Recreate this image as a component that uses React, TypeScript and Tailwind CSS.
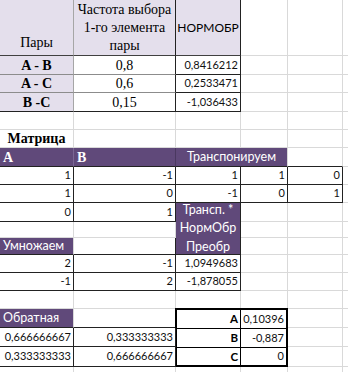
import React from "react";

const sans = "font-['Lato','Open_Sans',sans-serif]";
const serif = "font-['Liberation_Serif','Times_New_Roman',serif]";

// plain Excel cell with light gridlines on right/bottom
function Cell({ className = "", children }: { className?: string; children?: React.ReactNode }) {
  return (
    <div className={`flex items-center whitespace-nowrap border-r border-b border-[#d9d9d9] min-w-0 ${className}`}>
      {children}
    </div>
  );
}

const num = `${sans} text-[11px] justify-end pr-[2px] text-[#111] border-r-[#222] border-b-[#222]`;
const lav = "bg-[#e4dfec]";
const purple = `bg-[#60497a] text-white ${sans} text-[12.5px]`;

function Empty({ n }: { n: number }) {
  return (
    <>
      {Array.from({ length: n }).map((_, i) => (
        <Cell key={i} />
      ))}
    </>
  );
}

export default function App() {
  return (
    <div className="w-[348px] h-[372px] overflow-hidden bg-white">
      <div className="grid grid-cols-[74px_102px_65px_47px_55px_60px] grid-rows-[56px_19px_18px_19px_18px_18px_19px_18px_18px_19px_16px_17px_18px_18px_18px_19px_19px_20px_20px]">
        {/* header of pairs table */}
        <Cell className={`${lav} ${serif} text-[14px] items-end justify-center pb-[2px] border-r-[#a6a6a6] border-b-[#404040]`}>
          Пары
        </Cell>
        <Cell className={`${lav} ${serif} text-[14px] flex-col justify-center leading-[18px] border-r-[#222] border-b-[#404040]`}>
          <span>Частота выбора</span>
          <span>1-го элемента</span>
          <span>пары</span>
        </Cell>
        <Cell className={`${lav} ${sans} text-[12px] justify-center border-r-[#222] border-b-[#404040]`}>НОРМОБР</Cell>
        <Empty n={3} />

        {[
          ["A - B", "0,8", "0,8416212"],
          ["A - C", "0,6", "0,2533471"],
          ["B -C", "0,15", "-1,036433"],
        ].map(([p, f, v], i) => (
          <React.Fragment key={p}>
            <Cell
              className={`${lav} ${serif} font-bold text-[14px] justify-center border-r-[#a6a6a6] ${
                i === 2 ? "border-b-[#222]" : "border-b-[#8c8c8c]"
              }`}
            >
              {p}
            </Cell>
            <Cell
              className={`${serif} text-[14px] justify-center border-r-[#222] ${
                i === 2 ? "border-b-[#222]" : "border-b-[#8c8c8c]"
              }`}
            >
              {f}
            </Cell>
            <Cell className={num}>{v}</Cell>
            <Empty n={3} />
          </React.Fragment>
        ))}

        <Empty n={6} />

        {/* matrix */}
        <Cell className={`${serif} font-bold text-[14px] justify-center`}>Матрица</Cell>
        <Empty n={5} />

        <Cell className={`bg-[#60497a] text-white ${serif} font-bold text-[14px] pl-[3px] border-r-[#7a6694] border-b-[#222]`}>A</Cell>
        <Cell className={`bg-[#60497a] text-white ${serif} font-bold text-[14px] pl-[3px] border-r-[#4a3860] border-b-[#222]`}>B</Cell>
        <Cell className={`${purple} col-span-2 justify-center border-r-[#d9d9d9] border-b-[#222]`}>Транспонируем</Cell>
        <Cell className="border-b-[#222]" />
        <Cell />

        {[
          ["1", "-1", "1", "1", "0"],
          ["1", "0", "-1", "0", "1"],
        ].map((r, i) => (
          <React.Fragment key={i}>
            {r.map((v, j) => (
              <Cell key={j} className={num}>
                {v}
              </Cell>
            ))}
            <Cell />
          </React.Fragment>
        ))}

        <Cell className={num}>0</Cell>
        <Cell className={num}>1</Cell>
        <Cell className={`${purple} row-span-3 flex-col justify-center leading-[18.5px] border-r-[#222] border-b-[#222]`}>
          <span>Трансп. *</span>
          <span>НормОбр</span>
          <span>Преобр</span>
        </Cell>
        <Empty n={3} />

        <Empty n={5} />

        <Cell className={`${purple} pl-[3px] border-b-[#222]`}>Умножаем</Cell>
        <Cell className="border-b-[#222] border-r-[#222]" />
        <Empty n={3} />

        {[
          ["2", "-1", "1,0949683"],
          ["-1", "2", "-1,878055"],
        ].map((r, i) => (
          <React.Fragment key={i}>
            {r.map((v, j) => (
              <Cell key={j} className={num}>
                {v}
              </Cell>
            ))}
            <Empty n={3} />
          </React.Fragment>
        ))}

        <Empty n={6} />

        {/* inverse + coefficients box */}
        <Cell className={`${purple} pl-[3px] border-b-[#222]`}>Обратная</Cell>
        <Cell className="border-b-[#222]" />
        <div className="col-span-2 row-span-3 -ml-px -mt-px border-2 border-black grid grid-cols-[64px_1fr] grid-rows-[19px_19px_1fr] bg-white">
          {[
            ["A", "0,10396"],
            ["B", "-0,887"],
            ["C", "0"],
          ].map(([k, v], i) => (
            <React.Fragment key={k}>
              <div
                className={`flex items-center justify-end pr-[2px] ${sans} font-bold text-[11.5px] text-black border-r border-black ${
                  i < 2 ? "border-b" : ""
                }`}
              >
                {k}
              </div>
              <div
                className={`flex items-center justify-end pr-[2px] ${sans} text-[11px] text-[#111] border-black ${
                  i < 2 ? "border-b" : ""
                }`}
              >
                {v}
              </div>
            </React.Fragment>
          ))}
        </div>
        <Empty n={2} />

        {[
          ["0,666666667", "0,333333333"],
          ["0,333333333", "0,666666667"],
        ].map((r, i) => (
          <React.Fragment key={i}>
            {r.map((v, j) => (
              <Cell key={j} className={num}>
                {v}
              </Cell>
            ))}
            <Empty n={2} />
          </React.Fragment>
        ))}

        <Empty n={6} />
      </div>
    </div>
  );
}
